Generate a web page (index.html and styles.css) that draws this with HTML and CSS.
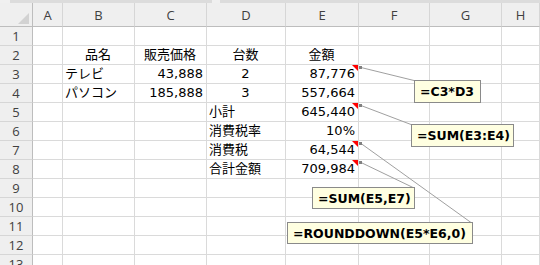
FILE: index.html
```html
<!DOCTYPE html>
<html lang="ja">
<head>
<meta charset="utf-8">
<link rel="stylesheet" href="styles.css">
</head>
<body>
<div class="app">
  <div class="strip"><span class="s1"></span><span class="s2"></span><span class="s3"></span><span class="s4"></span></div>
  <div class="sheet">
    <div class="corner"><span class="tri"></span></div>
    <div class="ch">A</div><div class="ch">B</div><div class="ch">C</div><div class="ch">D</div><div class="ch">E</div><div class="ch">F</div><div class="ch">G</div><div class="ch">H</div>

    <div class="rh">1</div><div class="c"></div><div class="c"></div><div class="c"></div><div class="c"></div><div class="c"></div><div class="c"></div><div class="c"></div><div class="c"></div>

    <div class="rh">2</div><div class="c"></div><div class="c ctr">品名</div><div class="c ctr">販売価格</div><div class="c ctr">台数</div><div class="c ctr">金額</div><div class="c"></div><div class="c"></div><div class="c"></div>

    <div class="rh">3</div><div class="c"></div><div class="c">テレビ</div><div class="c num">43,888</div><div class="c ctr">2</div><div class="c num note">87,776</div><div class="c"></div><div class="c"></div><div class="c"></div>

    <div class="rh">4</div><div class="c"></div><div class="c">パソコン</div><div class="c num">185,888</div><div class="c ctr">3</div><div class="c num">557,664</div><div class="c"></div><div class="c"></div><div class="c"></div>

    <div class="rh">5</div><div class="c"></div><div class="c"></div><div class="c"></div><div class="c">小計</div><div class="c num note">645,440</div><div class="c"></div><div class="c"></div><div class="c"></div>

    <div class="rh">6</div><div class="c"></div><div class="c"></div><div class="c"></div><div class="c">消費税率</div><div class="c num">10%</div><div class="c"></div><div class="c"></div><div class="c"></div>

    <div class="rh">7</div><div class="c"></div><div class="c"></div><div class="c"></div><div class="c">消費税</div><div class="c num note">64,544</div><div class="c"></div><div class="c"></div><div class="c"></div>

    <div class="rh">8</div><div class="c"></div><div class="c"></div><div class="c"></div><div class="c">合計金額</div><div class="c num note">709,984</div><div class="c"></div><div class="c"></div><div class="c"></div>

    <div class="rh">9</div><div class="c"></div><div class="c"></div><div class="c"></div><div class="c"></div><div class="c"></div><div class="c"></div><div class="c"></div><div class="c"></div>
    <div class="rh">10</div><div class="c"></div><div class="c"></div><div class="c"></div><div class="c"></div><div class="c"></div><div class="c"></div><div class="c"></div><div class="c"></div>
    <div class="rh">11</div><div class="c"></div><div class="c"></div><div class="c"></div><div class="c"></div><div class="c"></div><div class="c"></div><div class="c"></div><div class="c"></div>
    <div class="rh">12</div><div class="c"></div><div class="c"></div><div class="c"></div><div class="c"></div><div class="c"></div><div class="c"></div><div class="c"></div><div class="c"></div>
    <div class="rh">13</div><div class="c"></div><div class="c"></div><div class="c"></div><div class="c"></div><div class="c"></div><div class="c"></div><div class="c"></div><div class="c"></div>
  </div>

  <svg class="links" width="540" height="265" viewBox="0 0 540 265">
    <g stroke="#a0a0a0" stroke-width="1" fill="none">
      <line x1="361" y1="67.5" x2="414" y2="80.5"/>
      <line x1="361" y1="105.5" x2="411" y2="124.5"/>
      <line x1="361" y1="143.5" x2="471" y2="222.5"/>
      <line x1="361" y1="162.5" x2="413" y2="187.5"/>
    </g>
    <g fill="#808080">
      <rect x="359" y="66" width="3" height="3"/>
      <rect x="359" y="104" width="3" height="3"/>
      <rect x="359" y="142" width="3" height="3"/>
      <rect x="359" y="161" width="3" height="3"/>
    </g>
  </svg>

  <div class="cm cm1">=C3*D3</div>
  <div class="cm cm2">=SUM(E3:E4)</div>
  <div class="cm cm3">=SUM(E5,E7)</div>
  <div class="cm cm4">=ROUNDDOWN(E5*E6,0)</div>
</div>
</body>
</html>
```

FILE: styles.css
```css
html, body {
  margin: 0;
  padding: 0;
  background: #ffffff;
  overflow: hidden;
}

.app {
  position: relative;
  width: 540px;
  height: 265px;
  overflow: hidden;
  font-family: "DejaVu Sans", "Noto Sans CJK JP", sans-serif;
}

.strip {
  display: flex;
  height: 3px;
  background: #dcdcdc;
}
.strip .s1 { width: 10px; background: #f0f0f0; }
.strip .s2 { width: 202px; background: #dcdcdc; }
.strip .s3 { width: 8px; background: #f0f0f0; }
.strip .s4 { flex: 1; background: #dcdcdc; }

.sheet {
  display: grid;
  grid-template-columns: 33px 30px 72px 72px 79px 73px 71px 72px 1fr;
  grid-template-rows: 24px repeat(13, 19px);
}

.corner {
  position: relative;
  background: #efefef;
  border-right: 1px solid #bdbdbd;
  border-bottom: 1px solid #bdbdbd;
}
.corner .tri {
  position: absolute;
  right: 3px;
  bottom: 2px;
  width: 0;
  height: 0;
  border-left: 11px solid transparent;
  border-bottom: 11px solid #d2d2d2;
}

.ch {
  background: #efefef;
  border-right: 1px solid #d6d6d6;
  border-bottom: 1px solid #bdbdbd;
  display: flex;
  align-items: center;
  justify-content: center;
  font-family: "Open Sans", "DejaVu Sans", sans-serif;
  font-size: 13px;
  color: #404040;
  padding-top: 1px;
  box-sizing: border-box;
}

.rh {
  background: #efefef;
  border-right: 1px solid #bdbdbd;
  border-bottom: 1px solid #d6d6d6;
  display: flex;
  align-items: center;
  justify-content: center;
  font-family: "Open Sans", "DejaVu Sans", sans-serif;
  font-size: 13px;
  color: #404040;
}

.c {
  position: relative;
  border-right: 1px solid #dadada;
  border-bottom: 1px solid #dadada;
  display: flex;
  align-items: center;
  padding: 0 3px 0 2px;
  font-size: 13px;
  color: #000;
  white-space: nowrap;
  line-height: 18px;
  min-width: 0;
}

.ctr { justify-content: center; }
.num { justify-content: flex-end; }

.note::after {
  content: "";
  position: absolute;
  right: 0;
  top: 0;
  width: 0;
  height: 0;
  border-left: 6px solid transparent;
  border-top: 6px solid #ff0000;
}

.links {
  position: absolute;
  left: 0;
  top: 0;
  pointer-events: none;
}

.cm {
  position: absolute;
  box-sizing: border-box;
  display: flex;
  align-items: center;
  padding-left: 5px;
  background: #ffffe1;
  border: 1px solid #8a8a8a;
  font-family: "DejaVu Sans", sans-serif;
  font-weight: bold;
  font-size: 12.5px;
  color: #000;
  white-space: nowrap;
}
.cm1 { left: 414px; top: 80px; width: 67px; height: 23px; }
.cm2 { left: 411px; top: 124px; width: 103px; height: 23px; }
.cm3 { left: 312px; top: 187px; width: 103px; height: 22px; }
.cm4 { left: 287px; top: 222px; width: 186px; height: 22px; }
```
